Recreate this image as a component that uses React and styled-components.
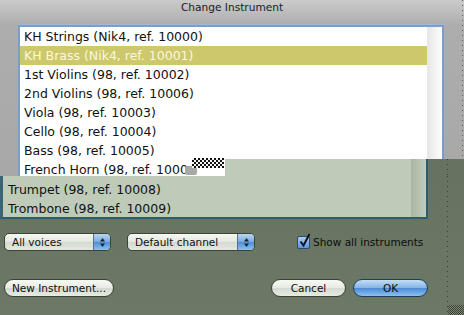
import React from 'react';
import styled, { createGlobalStyle } from 'styled-components';

const Global = createGlobalStyle`
  html, body { margin: 0; padding: 0; background: #a8a8a8; overflow: hidden; }
  #root { width: 464px; height: 315px; }
`;

const Window = styled.div`
  position: relative;
  width: 464px;
  height: 315px;
  overflow: hidden;
  display: flex;
  flex-direction: column;
  font-family: "DejaVu Sans", "Liberation Sans", sans-serif;
`;

const TopPane = styled.div`
  height: 176px;
  flex: none;
  display: flex;
  background: linear-gradient(#cbcbcb 0px, #adadad 25px, #a8a8a8 100%);
`;

const TopMain = styled.div`
  width: 462px;
  display: flex;
  flex-direction: column;
`;

const Title = styled.div`
  height: 25px;
  flex: none;
  text-align: center;
  font-size: 10.6px;
  line-height: 15px;
  color: #1c1c1c;
  padding-left: 2px;
`;

const EdgeDots = styled.div`
  width: 1px;
  flex: none;
  background: repeating-linear-gradient(${p => p.$dot} 0 1px, transparent 1px 5px);
`;

const ListFrame = styled.div`
  margin-left: 18px;
  width: 422px;
  flex: 1;
  display: flex;
  background: #fff;
  border: 2px solid #7b9dc9;
  border-bottom: none;
  box-shadow: 0 -1px 0 #a2b8d6;
`;

const Rows = styled.div`
  flex: 1;
  display: flex;
  flex-direction: column;
  padding-top: ${p => p.$top || 0}px;
`;

const Row = styled.div`
  height: 19px;
  flex: none;
  padding-left: ${p => p.$indent}px;
  font-size: 12.5px;
  line-height: 19px;
  white-space: nowrap;
  color: ${p => (p.$selected ? '#fbf8dc' : '#111')};
  background: ${p => (p.$selected ? '#cdc86c' : 'transparent')};
`;

const ScrollStrip = styled.div`
  width: 15px;
  flex: none;
  background: linear-gradient(90deg, ${p => p.$from}, ${p => p.$to});
`;

const BottomPane = styled.div`
  flex: 1;
  display: flex;
  background: linear-gradient(#677360, #6d7967);
`;

const BottomMain = styled.div`
  width: 447px;
  flex: none;
  display: flex;
  flex-direction: column;
`;

const BottomRest = styled.div`
  flex: 1;
  display: flex;
  flex-direction: column;
  justify-content: flex-end;
`;

const CornerGlitch = styled.div`
  height: 10px;
  background: repeating-conic-gradient(#3b4236 0 25%, #7b8675 0 50%) 0 0 / 2px 2px;
`;

const GreenList = styled.div`
  width: 423px;
  height: 41px;
  flex: none;
  display: flex;
  background: #bfcbb9;
  border-left: 3px solid #3a6373;
  border-right: 2px solid #2e5c70;
  border-bottom: 2px solid #2e5c70;
`;

const ControlRow = styled.div`
  display: flex;
  align-items: center;
  padding-left: 4px;
  margin-top: ${p => p.$top}px;
  height: 18px;
  flex: none;
`;

const Popup = styled.div`
  width: ${p => p.$w}px;
  height: 18px;
  box-sizing: border-box;
  margin-right: ${p => p.$gap || 0}px;
  display: flex;
  border: 1px solid #3d4439;
  border-radius: 5px;
  overflow: hidden;
  background: linear-gradient(#f6f8f3, #e3e8df 50%, #d3d9cf 51%, #e4e9e1);
  font-size: 10.5px;
  color: #111;
`;

const PopupLabel = styled.div`
  flex: 1;
  padding-left: 7px;
  line-height: 16px;
  white-space: nowrap;
`;

const Stepper = styled.div`
  width: 16px;
  flex: none;
  border-left: 1px solid #5a6f88;
  background: linear-gradient(#b9d6f3, #76a9e0 50%, #4f8ed6 51%, #8ec0ef);
  display: flex;
  align-items: center;
  justify-content: center;
`;

const Check = styled.div`
  width: 11px;
  height: 11px;
  margin-left: 42px;
  position: relative;
  border: 1px solid #2f4a6c;
  border-radius: 2px;
  background: linear-gradient(#a9cdf2, #5a96db);
  flex: none;
`;

const CheckMark = styled.svg`
  position: absolute;
  left: 1px;
  top: -4px;
`;

const CheckLabel = styled.span`
  margin-left: 3px;
  font-size: 10.5px;
  color: #0c0c0c;
  white-space: nowrap;
`;

const Button = styled.div`
  width: ${p => p.$w}px;
  height: 18px;
  box-sizing: border-box;
  margin-left: ${p => p.$left || 0}px;
  border: 1px solid ${p => (p.$primary ? '#1f3d5c' : '#3a4037')};
  border-radius: 9px;
  font-size: 10.5px;
  line-height: 16px;
  text-align: center;
  white-space: nowrap;
  color: #0c0c0c;
  background: ${p =>
    p.$primary
      ? 'linear-gradient(#c3ddf6, #83b4e6 50%, #4b8ad4 51%, #8cc2f0)'
      : 'linear-gradient(#f7f9f4, #e6ebe2 50%, #d4dad0 51%, #e7ece3)'};
`;

const Patch = styled.div`
  position: absolute;
  left: 225px;
  top: 159px;
  width: 239px;
  height: 17px;
  display: flex;
`;

const PatchGreen = styled.div`
  width: 186px;
  background: #bfcbb9;
`;

const PatchBorder = styled.div`
  width: 2px;
  background: #2e5c70;
`;

const PatchOlive = styled.div`
  flex: 1;
  display: flex;
  background: #677360;
`;

const Spacer = styled.div`
  width: ${p => p.$w}px;
  flex: none;
`;

const Checker = styled.div`
  position: absolute;
  left: 192px;
  top: 158px;
  width: 32px;
  height: 10px;
  background: repeating-conic-gradient(#111 0 25%, #f4f4f4 0 50%) 0 0 / 4px 4px;
`;

const Smudge = styled.div`
  position: absolute;
  left: 185px;
  top: 166px;
  width: 12px;
  height: 9px;
  background: #a7a9a5;
  border-radius: 2px;
`;

const topRows = [
  'KH Strings (Nik4, ref. 10000)',
  'KH Brass (Nik4, ref. 10001)',
  '1st Violins (98, ref. 10002)',
  '2nd Violins (98, ref. 10006)',
  'Viola (98, ref. 10003)',
  'Cello (98, ref. 10004)',
  'Bass (98, ref. 10005)',
  'French Horn (98, ref. 1000',
];

const bottomRows = ['Trumpet (98, ref. 10008)', 'Trombone (98, ref. 10009)'];

function Arrows() {
  return (
    <svg width="7" height="11" viewBox="0 0 7 11">
      <path d="M3.5 1 L6 4.5 L1 4.5 Z" fill="#1b2430" />
      <path d="M3.5 10 L6 6.5 L1 6.5 Z" fill="#1b2430" />
    </svg>
  );
}

export default function App() {
  return (
    <Window>
      <Global />
      <TopPane>
        <TopMain>
          <Title>Change Instrument</Title>
          <ListFrame>
            <Rows>
              {topRows.map((r, i) => (
                <Row key={r} $indent={4} $selected={i === 1}>
                  {r}
                </Row>
              ))}
            </Rows>
            <ScrollStrip $from="#e6e6e6" $to="#fdfdfd" />
          </ListFrame>
        </TopMain>
        <EdgeDots $dot="#5a5a5a" />
      </TopPane>
      <BottomPane>
        <BottomMain>
          <GreenList>
            <Rows $top={4}>
              {bottomRows.map(r => (
                <Row key={r} $indent={5}>
                  {r}
                </Row>
              ))}
            </Rows>
            <ScrollStrip $from="#a9b5a3" $to="#c2cebc" />
          </GreenList>
          <ControlRow $top={14}>
            <Popup $w={107} $gap={16}>
              <PopupLabel>All voices</PopupLabel>
              <Stepper>
                <Arrows />
              </Stepper>
            </Popup>
            <Popup $w={128}>
              <PopupLabel>Default channel</PopupLabel>
              <Stepper>
                <Arrows />
              </Stepper>
            </Popup>
            <Check>
              <CheckMark width="12" height="15" viewBox="0 0 12 15">
                <path d="M1.5 8.5 L4.5 12.5 L10.5 1" stroke="#0b1420" strokeWidth="2" fill="none" />
              </CheckMark>
            </Check>
            <CheckLabel>Show all instruments</CheckLabel>
          </ControlRow>
          <ControlRow $top={28}>
            <Button $w={110}>New Instrument...</Button>
            <Button $w={75} $left={157}>Cancel</Button>
            <Button $w={75} $left={7} $primary>OK</Button>
          </ControlRow>
        </BottomMain>
        <EdgeDots $dot="#3a4236" />
        <BottomRest>
          <CornerGlitch />
        </BottomRest>
      </BottomPane>
      <Patch>
        <PatchGreen />
        <ScrollStrip $from="#a9b5a3" $to="#c2cebc" />
        <PatchBorder />
        <PatchOlive>
          <Spacer $w={19} />
          <EdgeDots $dot="#3a4236" />
        </PatchOlive>
      </Patch>
      <Smudge />
      <Checker />
    </Window>
  );
}
